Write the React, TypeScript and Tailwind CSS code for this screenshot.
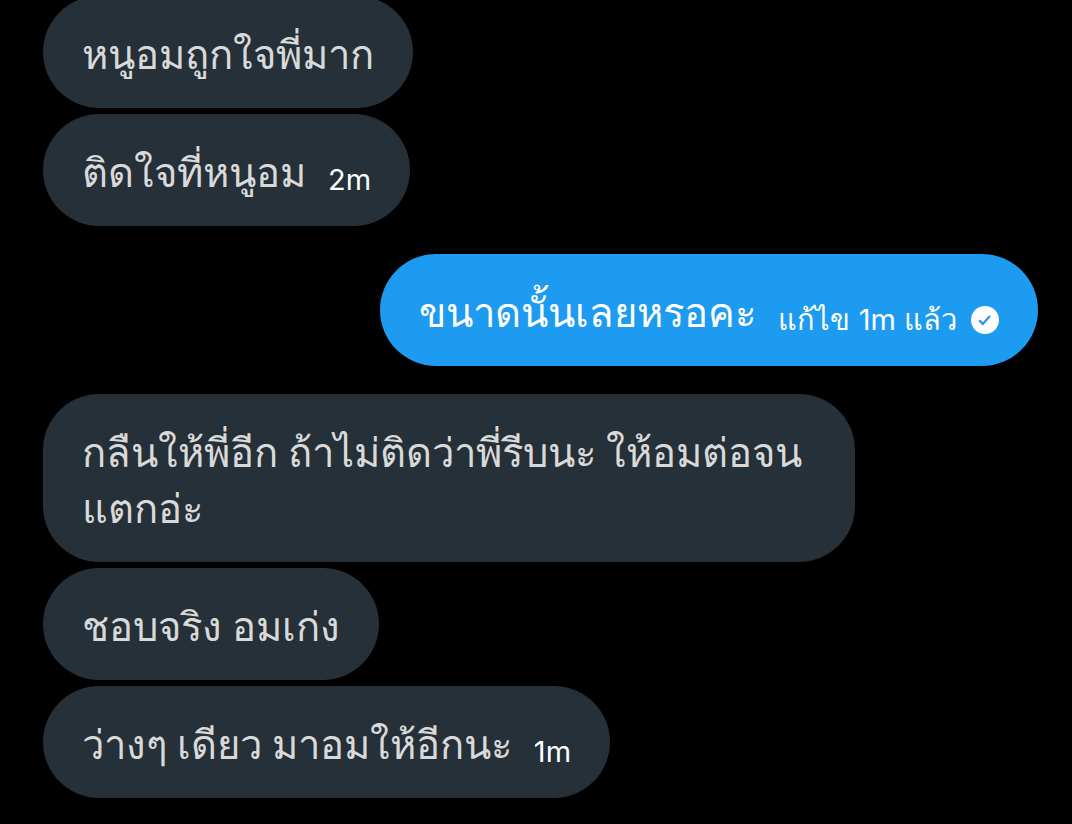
import type { ReactNode } from 'react';

type BubbleProps = {
  own?: boolean;
  meta?: string;
  children: ReactNode;
};

function VerifiedMark() {
  return (
    <svg viewBox="0 0 28 28" className="size-7 shrink-0" aria-hidden="true">
      <circle cx="14" cy="14" r="14" fill="#fff" />
      <path d="M8.3 14.4l3.5 3.5 7.2-8" fill="none" stroke="#1d9bf0" strokeWidth="2.2" />
    </svg>
  );
}

function Bubble({ own = false, meta, children }: BubbleProps) {
  return (
    <li className={own ? 'my-[22px] flex justify-end' : 'flex justify-start'}>
      <div
        className={
          own
            ? 'flex items-end gap-[22px] rounded-[56px] bg-[#1d9bf0] px-[39px] pt-8 pb-6 text-white'
            : 'flex max-w-[812px] items-end gap-[22px] rounded-[56px] bg-[#253038] px-[39px] pt-8 pb-6 text-[#d9d9d9]'
        }
      >
        <p className="font-['Roboto','Garuda'] text-[40px] leading-14">{children}</p>
        {meta && (
          <span className="flex items-center gap-[14px] font-['Inter','Garuda'] text-[29px] leading-11 whitespace-nowrap text-white">
            {meta}
            {own && <VerifiedMark />}
          </span>
        )}
      </div>
    </li>
  );
}

export default function App() {
  return (
    <main lang="th" className="min-h-screen overflow-hidden bg-black pr-[34px] pb-6 pl-[43px]">
      <ul className="-mt-1 flex flex-col gap-[6px]">
        <Bubble>หนูอมถูกใจพี่มาก</Bubble>
        <Bubble meta="2m">ติดใจที่หนูอม</Bubble>
        <Bubble own meta="แก้ไข 1m แล้ว">
          ขนาดนั้นเลยหรอคะ
        </Bubble>
        <Bubble>กลืนให้พี่อีก ถ้าไม่ติดว่าพี่รีบนะ ให้อมต่อจนแตกอ่ะ</Bubble>
        <Bubble>ชอบจริง อมเก่ง</Bubble>
        <Bubble meta="1m">ว่างๆ เดียว มาอมให้อีกนะ</Bubble>
      </ul>
    </main>
  );
}
